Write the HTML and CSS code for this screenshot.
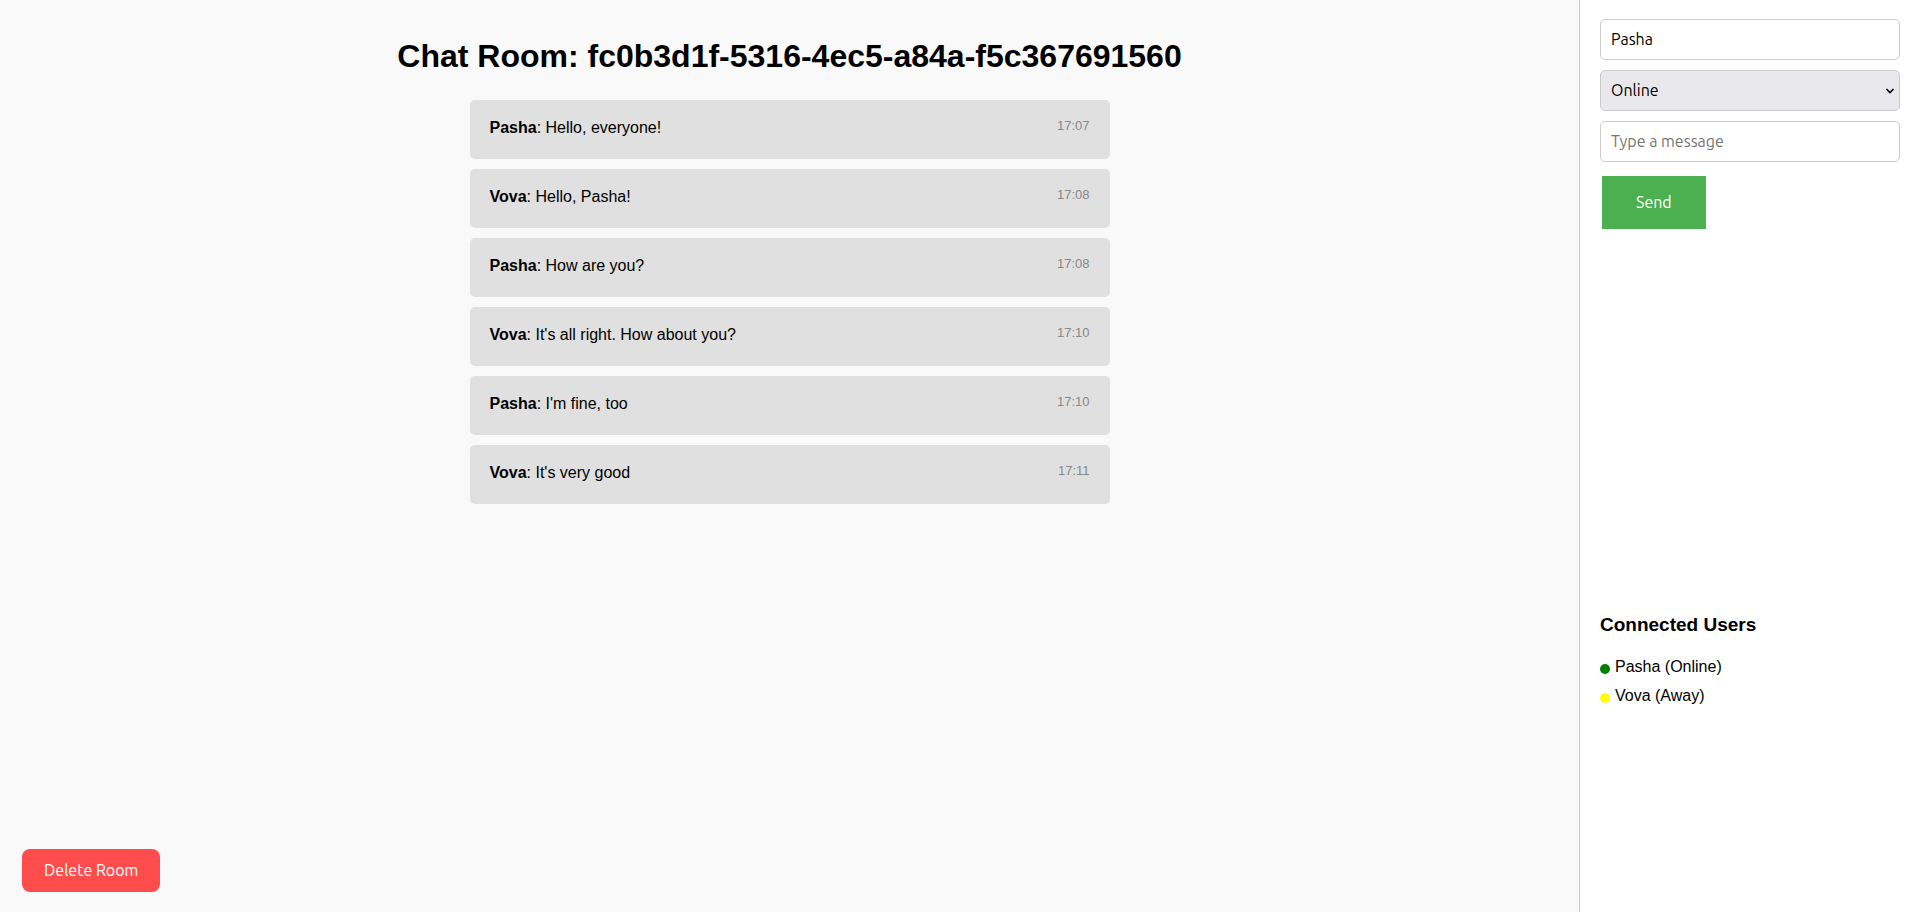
FILE: index.html
```html
<!DOCTYPE html>
<html lang="en">
<head>
<meta charset="utf-8">
<title>Chat Room</title>
<link rel="stylesheet" href="styles.css">
</head>
<body>
<div class="app">
  <main class="chat">
    <h1 class="chat-title">Chat Room: fc0b3d1f-5316-4ec5-a84a-f5c367691560</h1>
    <ul class="messages">
      <li class="message"><span><strong>Pasha</strong>: Hello, everyone!</span><time class="message-time">17:07</time></li>
      <li class="message"><span><strong>Vova</strong>: Hello, Pasha!</span><time class="message-time">17:08</time></li>
      <li class="message"><span><strong>Pasha</strong>: How are you?</span><time class="message-time">17:08</time></li>
      <li class="message"><span><strong>Vova</strong>: It's all right. How about you?</span><time class="message-time">17:10</time></li>
      <li class="message"><span><strong>Pasha</strong>: I'm fine, too</span><time class="message-time">17:10</time></li>
      <li class="message"><span><strong>Vova</strong>: It's very good</span><time class="message-time">17:11</time></li>
    </ul>
    <button class="delete-button" type="button">Delete Room</button>
  </main>
  <aside class="sidebar">
    <form class="controls">
      <input class="field" type="text" value="Pasha" aria-label="Username">
      <div class="select-wrap">
        <select class="field status" aria-label="Status">
          <option>Online</option>
          <option>Away</option>
        </select>
        <svg class="chevron" viewBox="0 0 10 6" aria-hidden="true"><path d="M1.5 1 5 4.5 8.5 1" fill="none" stroke="#000" stroke-width="1.6"/></svg>
      </div>
      <input class="field" type="text" placeholder="Type a message" aria-label="Message">
      <button class="send-button" type="button">Send</button>
    </form>
    <section class="users">
      <h2 class="users-title">Connected Users</h2>
      <ul class="user-list">
        <li class="user"><span class="dot online"></span>Pasha (Online)</li>
        <li class="user"><span class="dot away"></span>Vova (Away)</li>
      </ul>
    </section>
  </aside>
</div>
</body>
</html>
```
FILE: styles.css
```css
* {
  box-sizing: border-box;
}

body {
  margin: 0;
  font: 16px/19px "Liberation Sans", Arial, sans-serif;
  color: #000;
  background: #f9f9f9;
}

ul {
  list-style: none;
  margin: 0;
  padding: 0;
}

.app {
  display: flex;
  min-height: 100vh;
}

.chat {
  flex: 1;
  display: flex;
  flex-direction: column;
  align-items: center;
  padding: 20px;
}

.chat-title {
  margin: 18px 0 25px;
  font-size: 32px;
  line-height: 37px;
  text-align: center;
}

.messages {
  display: flex;
  flex-direction: column;
  gap: 10px;
  width: 100%;
  max-width: 640px;
}

.message {
  display: flex;
  justify-content: space-between;
  padding: 18px 20px 22px;
  border-radius: 5px;
  background: #e0e0e0;
}

.message-time {
  font-size: 13px;
  line-height: 16px;
  color: #888;
}

.delete-button {
  align-self: flex-start;
  margin: auto 0 0 2px;
  padding: 10px 22px;
  border: 0;
  border-radius: 8px;
  background: #ff4d4d;
  color: #fff;
  font: 16px/23px Ubuntu, "Noto Sans", sans-serif;
}

.sidebar {
  display: grid;
  grid-template-rows: 2fr 1fr;
  width: 340px;
  padding: 0 19px 0 20px;
  border-left: 1px solid #ccc;
  background: #fff;
}

.controls {
  display: flex;
  flex-direction: column;
  gap: 10px;
  padding-top: 19px;
}

.field {
  display: block;
  width: 100%;
  height: 41px;
  padding: 0 10px 2px;
  border: 1px solid #ccc;
  border-radius: 5px;
  background: #fff;
  color: #000;
  font: 16px/20px Ubuntu, "Noto Sans", sans-serif;
}

.field::placeholder {
  color: #757575;
}

.select-wrap {
  position: relative;
}

.status {
  appearance: none;
  background: #e9e9ed;
}

.chevron {
  position: absolute;
  top: 18px;
  right: 5px;
  width: 10px;
  height: 6px;
  pointer-events: none;
}

.send-button {
  align-self: flex-start;
  margin: 4px 2px;
  padding: 15px 34px;
  border: 0;
  background: #4caf50;
  color: #fff;
  font: 16px/23px Ubuntu, "Noto Sans", sans-serif;
}

.users-title {
  margin: 6px 0 21px;
  font-size: 19px;
  line-height: 22px;
}

.user-list {
  display: flex;
  flex-direction: column;
  gap: 10px;
}

.user {
  display: flex;
  align-items: flex-end;
  gap: 5px;
}

.dot {
  width: 10px;
  height: 10px;
  margin-bottom: 2px;
  border-radius: 50%;
}

.online {
  background: green;
}

.away {
  background: yellow;
}
```
